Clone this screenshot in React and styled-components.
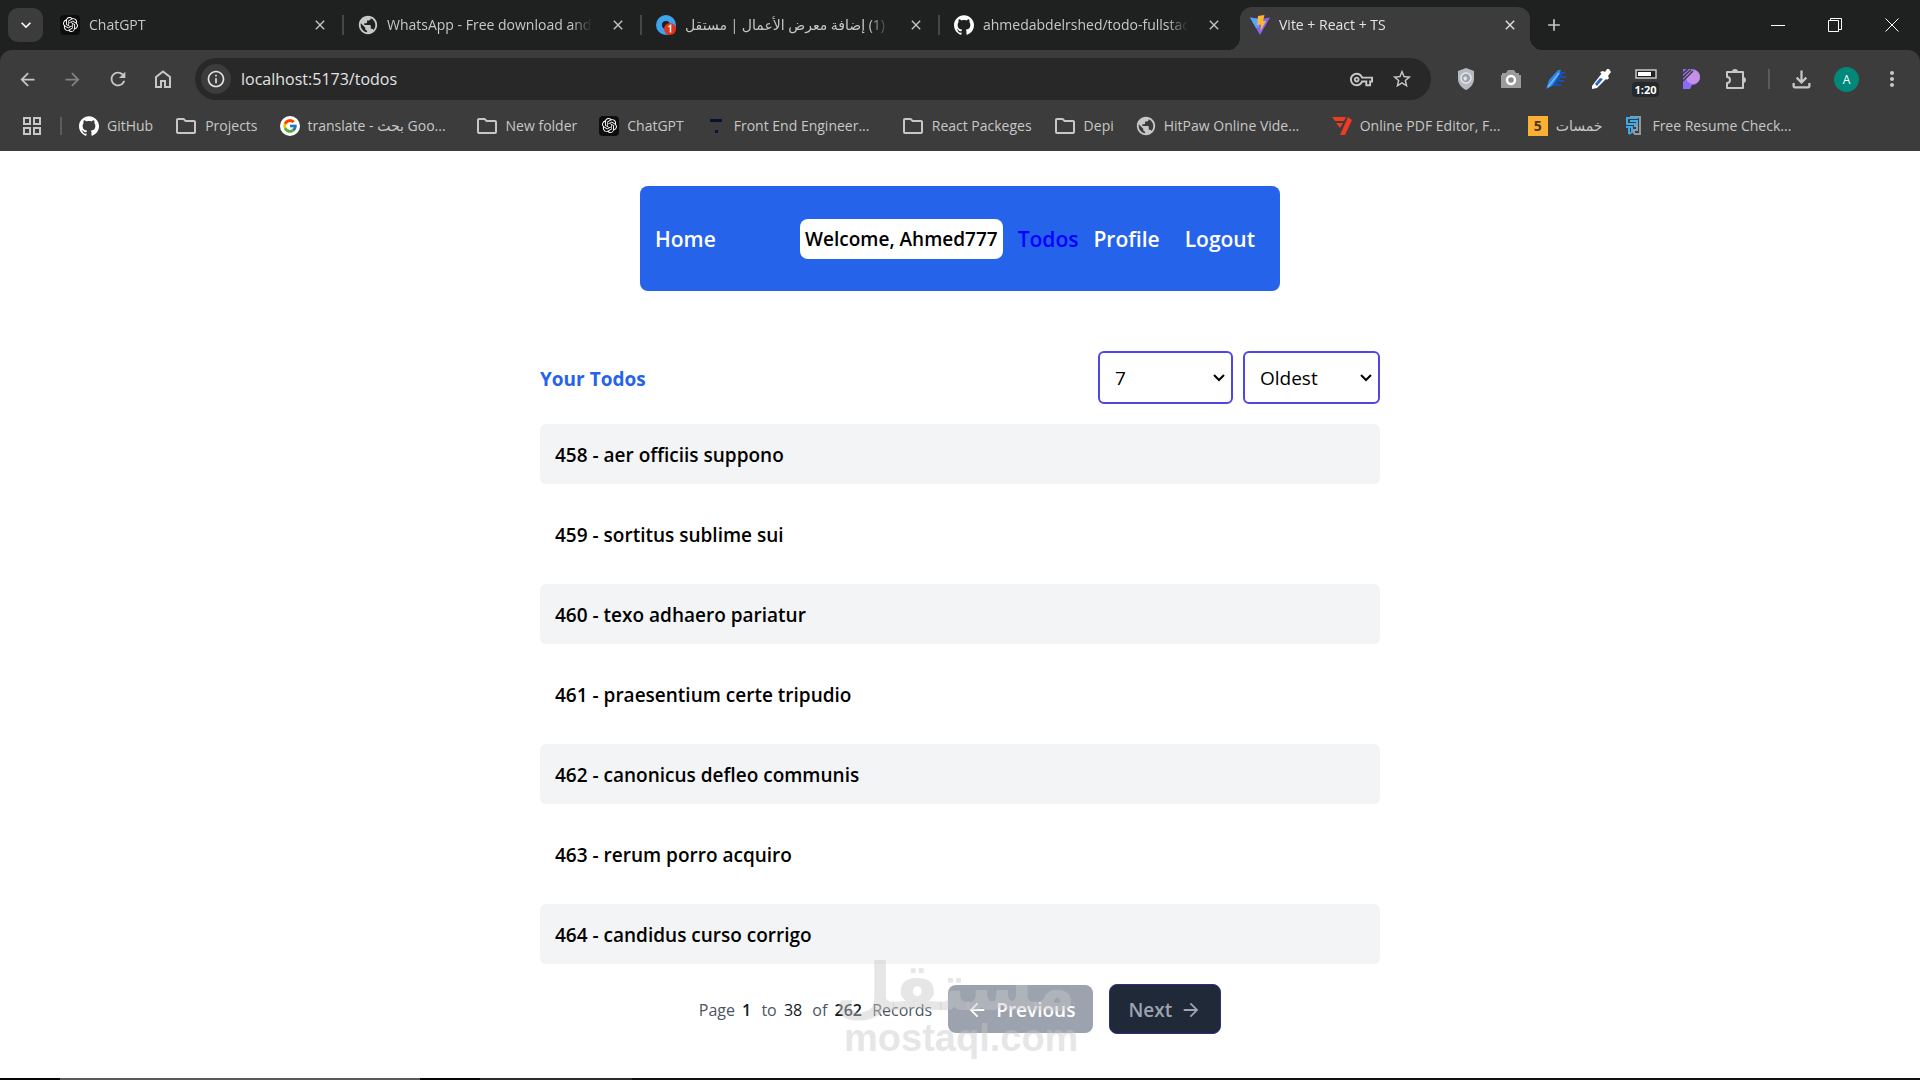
import React from "react";
import styled, { createGlobalStyle } from "styled-components";
import { SiGithub, SiOpenai } from "react-icons/si";
import { FcGoogle } from "react-icons/fc";
import {
  MdArrowBack,
  MdArrowForward,
  MdRefresh,
  MdInfoOutline,
  MdClose,
  MdAdd,
  MdStarBorder,
  MdOutlineVpnKey,
  MdOutlineFileDownload,
  MdMoreVert,
  MdOutlineFolder,
  MdPublic,
  MdGridView,
  MdKeyboardArrowDown,
} from "react-icons/md";

const tabs = [
  { title: "ChatGPT", icon: "openai" },
  { title: "WhatsApp - Free download and install", icon: "globe" },
  { title: "(1) إضافة معرض الأعمال | مستقل", icon: "mostaql", rtl: true },
  { title: "ahmedabdelrshed/todo-fullstack-app", icon: "github" },
  { title: "Vite + React + TS", icon: "vite", active: true },
];

const bookmarks = [
  { title: "GitHub", icon: "github" },
  { title: "Projects", icon: "folder" },
  { title: "translate - بحث Goo...", icon: "google", long: true },
  { title: "New folder", icon: "folder" },
  { title: "ChatGPT", icon: "openai" },
  { title: "Front End Engineer...", icon: "dash", long: true },
  { title: "React Packeges", icon: "folder" },
  { title: "Depi", icon: "folder" },
  { title: "HitPaw Online Vide...", icon: "globe", long: true },
  { title: "Online PDF Editor, F...", icon: "pdf", long: true },
  { title: "خمسات", icon: "khamsat" },
  { title: "Free Resume Check...", icon: "resume", long: true },
];

const todos = [
  { id: 458, title: "aer officiis suppono" },
  { id: 459, title: "sortitus sublime sui" },
  { id: 460, title: "texo adhaero pariatur" },
  { id: 461, title: "praesentium certe tripudio" },
  { id: 462, title: "canonicus defleo communis" },
  { id: 463, title: "rerum porro acquiro" },
  { id: 464, title: "candidus curso corrigo" },
];

const SiteIcon = ({ name }) => {
  switch (name) {
    case "openai":
      return (
        <DarkBadge>
          <SiOpenai size={15} />
        </DarkBadge>
      );
    case "github":
      return <SiGithub size={20} color="#fff" />;
    case "google":
      return (
        <LightBadge>
          <FcGoogle size={16} />
        </LightBadge>
      );
    case "folder":
      return <MdOutlineFolder size={24} />;
    case "globe":
      return <MdPublic size={22} />;
    case "mostaql":
      return (
        <svg width="20" height="20" viewBox="0 0 20 20">
          <circle cx="10" cy="10" r="7" fill="none" stroke="#3fa3ee" strokeWidth="6" />
          <circle cx="14" cy="14" r="6" fill="#e2331d" />
          <path d="M12.5 12 L14.5 10.5 V17.5" fill="none" stroke="#fff" strokeWidth="1.5" />
        </svg>
      );
    case "vite":
      return (
        <svg width="20" height="20" viewBox="0 0 20 20">
          <path d="M0 2.5 L10 20 L20 2.5 L11.5 4 Z" fill="#8a63f5" />
          <path d="M0 2.5 L8 4 L9 12 L6 13 Z" fill="#4da9fb" />
          <path d="M8 1 L14.5 0 L13 6 L16 6 L10.5 16 L11 9.5 L7 10 Z" fill="#fdb62f" />
        </svg>
      );
    case "dash":
      return (
        <svg width="20" height="20" viewBox="0 0 20 20">
          <path d="M4 3 H16 V6 H4 Z M9 14 H12 V17 H9 Z" fill="#0b1033" />
        </svg>
      );
    case "pdf":
      return (
        <svg width="20" height="20" viewBox="0 0 20 20">
          <path d="M0 1 H14 L12 5 H3 Z M4 7 H11 L8 12 Z M16 1 L20 4 L13 19 H8 Z" fill="#ee3b22" />
        </svg>
      );
    case "khamsat":
      return <FiveBadge>5</FiveBadge>;
    case "resume":
      return (
        <svg width="18" height="20" viewBox="0 0 18 20" fill="none" strokeWidth="2">
          <path d="M5 1 H15 V18 H9 M9 10 H12 V14 H9 V18" stroke="#8d9aa5" />
          <path d="M13 2 H2 V8 H12 V5 H5 M1 11 H8 M4 11 V18 M7 11 V16 L4 18" stroke="#3ea9e8" />
        </svg>
      );
    default:
      return null;
  }
};

const Extensions = () => (
  <>
    <ToolButton aria-label="Security">
      <svg width="18" height="22" viewBox="0 0 18 22">
        <path d="M9 0 L17 3 V11 C17 16 13 20 9 22 C5 20 1 16 1 11 V3 Z" fill="#b4babf" />
        <circle cx="9" cy="10" r="5" fill="#9aa2ab" stroke="#e6e9ec" strokeWidth="1.5" />
        <path d="M6 10 L9 8 L10 11 L8 13 Z" fill="#e6e9ec" />
      </svg>
    </ToolButton>
    <ToolButton aria-label="Screenshot">
      <svg width="20" height="20" viewBox="0 0 20 20">
        <path d="M1 6 V4 H5 L7 1 H13 L15 4 H18 V6 H20 V19 H0 V6 Z" fill="#9b9b9b" />
        <circle cx="10" cy="11" r="4" fill="#8a8a8a" stroke="#fff" strokeWidth="2.5" />
      </svg>
    </ToolButton>
    <ToolButton aria-label="Feather">
      <svg width="20" height="20" viewBox="0 0 20 20">
        <path d="M10 6 L13 3 H19 V5 H16 V7 H20 V9 H14 V11 H18 V13 H11 V15 H15 V17 H6 Z" fill="#1b4fae" />
        <path d="M0 20 L3 11 L12 1 H15 L13 6 L6 17 Z" fill="#2e86e8" />
        <path d="M2 18 L13 4" stroke="#6fb8f7" strokeWidth="1.5" />
      </svg>
    </ToolButton>
    <ToolButton aria-label="Color picker">
      <svg width="20" height="20" viewBox="0 0 20 20">
        <path d="M11 4 L16 9 L6 19 L1 20 L1 17 Z" fill="#fff" />
        <path d="M9 9 L12 10 L6 17 L4 15 Z" fill="#2867c9" />
        <path d="M9 3 L12 2 L14 3 L16 0 H18 L20 3 L17 7 L18 9 L16 11 Z" fill="#fff" />
      </svg>
    </ToolButton>
    <TimerButton aria-label="Timer">
      <svg width="22" height="10" viewBox="0 0 22 10">
        <path d="M1 1 H21 V9 H1 Z" fill="#222" stroke="#c9c9c9" strokeWidth="1.5" />
        <path d="M3 3 H16 V7 H3 Z" fill="#fff" />
      </svg>
      <TimerText>1:20</TimerText>
    </TimerButton>
    <ToolButton aria-label="Palette">
      <svg width="18" height="20" viewBox="0 0 18 20">
        <path d="M1 0 H10 A8 8 0 0 1 10 16 L8 20 H1 Z" fill="#8b6cf6" />
        <circle cx="11" cy="8" r="7" fill="#c690ea" />
        <path d="M0 5 L6 0 M0 9 L9 1 M1 12 L11 2" stroke="#3c3c3c" strokeWidth="1.5" />
      </svg>
    </ToolButton>
    <ToolButton aria-label="Extensions">
      <svg width="22" height="22" viewBox="0 0 22 22" fill="none" stroke="currentColor" strokeWidth="2">
        <path
          d="M2 4 H18 V20 H2 V15 C6 15 6 9 2 9 Z"
          strokeLinejoin="round"
        />
        <path d="M8 4 A2 2 0 0 1 12 4 Z M18 10 A2 2 0 0 1 18 14 Z" fill="currentColor" />
      </svg>
    </ToolButton>
  </>
);

function BrowserChrome() {
  return (
    <Browser>
      <TabStrip>
        <TabSearch aria-label="Search tabs">
          <MdKeyboardArrowDown size={20} />
        </TabSearch>
        {tabs.map((tab) => (
          <Tab key={tab.title} $active={tab.active}>
            <IconSlot>
              <SiteIcon name={tab.icon} />
            </IconSlot>
            <TabTitle dir={tab.rtl ? "rtl" : "ltr"}>{tab.title}</TabTitle>
            <TabClose aria-label="Close tab">
              <MdClose size={16} />
            </TabClose>
          </Tab>
        ))}
        <NewTab aria-label="New tab">
          <MdAdd size={20} />
        </NewTab>
        <WindowButtons>
          <WindowButton aria-label="Minimize">
            <svg width="14" height="14" viewBox="0 0 14 14">
              <path d="M0 7.5 H14" stroke="#fff" />
            </svg>
          </WindowButton>
          <WindowButton aria-label="Restore">
            <svg width="14" height="14" viewBox="0 0 14 14" fill="none" stroke="#fff">
              <path d="M0.5 2.5 H10.5 V13.5 H0.5 Z M2.5 2.5 V0.5 H13.5 V11.5 H10.5" />
            </svg>
          </WindowButton>
          <WindowButton aria-label="Close">
            <svg width="14" height="14" viewBox="0 0 14 14">
              <path d="M0.5 0.5 L13.5 13.5 M13.5 0.5 L0.5 13.5" stroke="#fff" />
            </svg>
          </WindowButton>
        </WindowButtons>
      </TabStrip>
      <Toolbar>
        <ToolButton aria-label="Back">
          <MdArrowBack size={21} />
        </ToolButton>
        <ToolButton aria-label="Forward" $dim>
          <MdArrowForward size={21} />
        </ToolButton>
        <ToolButton aria-label="Reload">
          <MdRefresh size={22} />
        </ToolButton>
        <ToolButton aria-label="Home page">
          <svg width="16" height="18" viewBox="0 0 16 18" fill="none" stroke="currentColor" strokeWidth="2">
            <path d="M1 7 L8 1.5 L15 7 V17 H10 V11 H6 V17 H1 Z" />
          </svg>
        </ToolButton>
        <AddressBar>
          <InfoBadge>
            <MdInfoOutline size={20} />
          </InfoBadge>
          <AddressInput aria-label="Address" defaultValue="localhost:5173/todos" />
          <MdOutlineVpnKey size={23} />
          <MdStarBorder size={22} />
        </AddressBar>
        <Extensions />
        <ToolDivider />
        <ToolButton aria-label="Downloads">
          <MdOutlineFileDownload size={27} />
        </ToolButton>
        <ToolButton aria-label="Account">
          <Avatar>A</Avatar>
        </ToolButton>
        <ToolButton aria-label="Menu">
          <MdMoreVert size={24} />
        </ToolButton>
      </Toolbar>
      <BookmarksBar>
        <MdGridView size={24} />
        <BookmarksDivider />
        {bookmarks.map((bookmark) => (
          <Bookmark key={bookmark.title} href="#">
            <IconSlot>
              <SiteIcon name={bookmark.icon} />
            </IconSlot>
            <BookmarkLabel $long={bookmark.long}>{bookmark.title}</BookmarkLabel>
          </Bookmark>
        ))}
      </BookmarksBar>
    </Browser>
  );
}

function Navbar() {
  return (
    <Nav>
      <NavLink href="#">Home</NavLink>
      <NavLinks>
        <Welcome>Welcome, Ahmed777</Welcome>
        <NavLink href="#" $active>
          Todos
        </NavLink>
        <NavLink href="#">Profile</NavLink>
        <LogoutButton>Logout</LogoutButton>
      </NavLinks>
    </Nav>
  );
}

function Paginator() {
  return (
    <Pagination>
      <PageInfo>
        Page <PageNumber $bold>1</PageNumber> to <PageNumber>38</PageNumber> of{" "}
        <PageNumber $bold>262</PageNumber> Records
      </PageInfo>
      <PageButton disabled $muted>
        <MdArrowBack size={22} />
        Previous
      </PageButton>
      <PageButton>
        Next
        <MdArrowForward size={22} />
      </PageButton>
      <Watermark aria-hidden="true">
        <WatermarkArabic dir="rtl">مستقل</WatermarkArabic>
        <WatermarkLatin>mostaql.com</WatermarkLatin>
      </Watermark>
    </Pagination>
  );
}

export default function App() {
  return (
    <>
      <GlobalStyle />
      <Screen>
        <BrowserChrome />
        <Page>
          <Navbar />
          <TodosSection>
            <TodosHeader>
              <TodosTitle>Your Todos</TodosTitle>
              <Filters>
                <Select aria-label="Todos per page" defaultValue="7" $width={135}>
                  <option value="7">7</option>
                  <option value="10">10</option>
                </Select>
                <Select aria-label="Sort order" defaultValue="Oldest" $width={137}>
                  <option>Oldest</option>
                  <option>Latest</option>
                </Select>
              </Filters>
            </TodosHeader>
            <TodoList>
              {todos.map((todo) => (
                <TodoItem key={todo.id}>
                  {todo.id} - {todo.title}
                </TodoItem>
              ))}
            </TodoList>
            <Paginator />
          </TodosSection>
        </Page>
        <Taskbar />
      </Screen>
    </>
  );
}

const GlobalStyle = createGlobalStyle`
  * {
    box-sizing: border-box;
  }

  body {
    margin: 0;
    background: #fff;
    font-family: "Open Sans", "DejaVu Sans", sans-serif;
  }

  button {
    border: 0;
    padding: 0;
    background: none;
    color: inherit;
    font: inherit;
  }

  a {
    color: inherit;
    text-decoration: none;
  }

  svg {
    flex-shrink: 0;
  }
`;

const Screen = styled.div`
  display: flex;
  flex-direction: column;
  min-height: 100vh;
`;

const Browser = styled.header`
  background: #1f2020;
  color: #c7c7c7;
  font-size: 14px;
`;

const TabStrip = styled.div`
  display: flex;
  align-items: flex-end;
  height: 50px;
  padding-left: 8px;
`;

const TabSearch = styled.button`
  display: flex;
  align-items: center;
  justify-content: center;
  width: 35px;
  height: 34px;
  margin: 0 3px 8px 0;
  border-radius: 10px;
  background: #3c3c3c;
  color: #fff;
`;

const Tab = styled.div`
  position: relative;
  display: flex;
  align-items: center;
  flex: 0 1 ${(props) => (props.$active ? 290 : 298)}px;
  min-width: 0;
  height: 43px;
  margin: ${(props) => (props.$active ? "0 2px" : "0")};
  padding: ${(props) => (props.$active ? "0 12px 8px 9px" : "0 16px 8px 13px")};
  border-radius: 12px 12px 0 0;
  background: ${(props) => (props.$active ? "#3c3c3c" : "transparent")};
  color: ${(props) => (props.$active ? "#e3e3e3" : "#c7c7c7")};

  /* curved feet of the selected tab */
  &::before {
    content: "";
    display: ${(props) => (props.$active ? "block" : "none")};
    position: absolute;
    left: -12px;
    right: -12px;
    bottom: 0;
    height: 12px;
    background:
      radial-gradient(circle at 0 0, transparent 12px, #3c3c3c 12px) left / 12px 12px no-repeat,
      radial-gradient(circle at 100% 0, transparent 12px, #3c3c3c 12px) right / 12px 12px no-repeat;
  }

  &:not(:nth-last-child(-n + 4))::after {
    content: "";
    position: absolute;
    right: 0;
    top: 8px;
    width: 2px;
    height: 20px;
    background: #474747;
  }
`;

const IconSlot = styled.span`
  display: flex;
  align-items: center;
  justify-content: center;
  flex: 0 0 22px;
  height: 22px;
`;

const TabTitle = styled.span`
  flex: 1;
  margin: 0 18px 0 8px;
  overflow: hidden;
  white-space: nowrap;
  text-align: left;
  mask-image: linear-gradient(to right, #000 90%, transparent);
`;

const TabClose = styled.button`
  display: flex;
`;

const NewTab = styled.button`
  display: flex;
  align-items: center;
  height: 50px;
  margin-left: 12px;
`;

const WindowButtons = styled.div`
  display: flex;
  margin-left: auto;
`;

const WindowButton = styled.button`
  display: flex;
  align-items: center;
  justify-content: center;
  width: 57px;
  height: 50px;
`;

const Toolbar = styled.div`
  display: flex;
  align-items: center;
  height: 58px;
  padding: 0 6px 0 5px;
  border-radius: 12px 12px 0 0;
  background: #3c3c3c;
`;

const ToolButton = styled.button`
  display: flex;
  align-items: center;
  justify-content: center;
  width: 45px;
  height: 42px;
  opacity: ${(props) => (props.$dim ? 0.5 : 1)};
`;

const TimerButton = styled(ToolButton)`
  flex-direction: column;
  gap: 3px;
  padding-top: 8px;
`;

const TimerText = styled.span`
  padding: 0 2px;
  border-radius: 4px;
  background: #24292e;
  color: #fff;
  font-size: 11px;
  font-weight: 700;
  line-height: 15px;
`;

const AddressBar = styled.div`
  display: flex;
  align-items: center;
  flex: 1;
  gap: 18px;
  height: 42px;
  margin: 0 12px 0 10px;
  padding: 0 18px 0 6px;
  border-radius: 21px;
  background: #282828;
`;

const InfoBadge = styled.span`
  display: flex;
  align-items: center;
  justify-content: center;
  width: 30px;
  height: 30px;
  margin-right: -8px;
  border-radius: 50%;
  background: #3c3c3c;
  color: #e3e3e3;
`;

const AddressInput = styled.input`
  flex: 1;
  min-width: 0;
  border: 0;
  padding: 0;
  outline: none;
  background: transparent;
  color: #e3e3e3;
  font: inherit;
  font-size: 16px;
`;

const ToolDivider = styled.span`
  width: 2px;
  height: 20px;
  margin: 0 9px 0 10px;
  background: #5c5c5c;
`;

const Avatar = styled.span`
  display: flex;
  align-items: center;
  justify-content: center;
  width: 25px;
  height: 25px;
  border-radius: 50%;
  background: #00897b;
  color: #fff;
  font-size: 12px;
`;

const BookmarksBar = styled.nav`
  display: flex;
  align-items: center;
  height: 43px;
  padding: 0 20px 8px;
  overflow: hidden;
  background: #3c3c3c;
`;

const BookmarksDivider = styled.span`
  width: 2px;
  height: 18px;
  margin: 0 16px;
  background: #5c5c5c;
`;

const Bookmark = styled.a`
  display: flex;
  align-items: center;
  gap: 7px;
  margin-right: 21px;
  white-space: nowrap;
`;

const BookmarkLabel = styled.span`
  min-width: ${(props) => (props.$long ? "146px" : "0")};
`;

const DarkBadge = styled.span`
  display: flex;
  align-items: center;
  justify-content: center;
  width: 20px;
  height: 20px;
  border-radius: 4px;
  background: #0d0d0d;
  color: #fff;
`;

const LightBadge = styled(DarkBadge)`
  border-radius: 50%;
  background: #fff;
`;

const FiveBadge = styled(DarkBadge)`
  border-radius: 0;
  background: #fbb034;
  color: #4a3426;
  font-size: 14px;
  font-weight: 700;
`;

const Page = styled.main`
  flex: 1;
  padding: 35px 16px 0;
`;

const Nav = styled.nav`
  display: flex;
  align-items: center;
  justify-content: space-between;
  max-width: 640px;
  height: 105px;
  margin: 0 auto;
  padding: 0 25px 0 15px;
  border-radius: 8px;
  background: #2563eb;
  color: #fff;
  font-size: 21px;
  font-weight: 600;
`;

const NavLinks = styled.div`
  display: flex;
  align-items: center;
  gap: 15px;
`;

const NavLink = styled.a`
  color: ${(props) => (props.$active ? "#0000ff" : "#fff")};
`;

const Welcome = styled.span`
  padding: 0 5px;
  border-radius: 8px;
  background: #fff;
  color: #000;
  font-size: 19px;
  line-height: 40px;
`;

const LogoutButton = styled.button`
  margin-left: 10px;
`;

const TodosSection = styled.section`
  max-width: 840px;
  margin: 60px auto 0;
`;

const TodosHeader = styled.div`
  display: flex;
  align-items: center;
  justify-content: space-between;
  margin-bottom: 20px;
`;

const TodosTitle = styled.h1`
  margin: 0;
  padding-top: 2px;
  color: #2563eb;
  font-size: 19px;
  font-weight: 700;
`;

const Filters = styled.div`
  display: flex;
  gap: 10px;
`;

const Select = styled.select`
  width: ${(props) => props.$width}px;
  height: 53px;
  padding: 0 16px 0 15px;
  border: 2px solid #4f46e5;
  border-radius: 6px;
  appearance: none;
  background: #fff
    url("data:image/svg+xml,%3Csvg xmlns='http://www.w3.org/2000/svg' width='12' height='8' fill='none' stroke='black' stroke-width='2'%3E%3Cpath d='M1 1 L6 6 L11 1'/%3E%3C/svg%3E")
    right 6px center no-repeat;
  color: #000;
  font-family: inherit;
  font-size: 19px;
`;

const TodoList = styled.ul`
  display: flex;
  flex-direction: column;
  gap: 20px;
  margin: 0;
  padding: 0;
  list-style: none;
`;

const TodoItem = styled.li`
  padding: 2px 15px 0;
  border-radius: 6px;
  color: #000;
  font-size: 19px;
  font-weight: 600;
  line-height: 58px;

  &:nth-child(odd) {
    background: #f3f4f6;
  }
`;

const Pagination = styled.div`
  position: relative;
  display: flex;
  align-items: center;
  justify-content: center;
  gap: 16px;
  margin-top: 20px;
`;

const PageInfo = styled.p`
  margin: 0;
  padding-top: 2px;
  color: #4b5563;
  font-size: 16px;
`;

const PageNumber = styled.span`
  margin: 0 6px 0 3px;
  color: #111827;
  font-weight: ${(props) => (props.$bold ? 600 : 400)};
`;

const PageButton = styled.button`
  display: flex;
  align-items: center;
  gap: 8px;
  height: ${(props) => (props.$muted ? 48 : 50)}px;
  padding: 2px 18px 0;
  border: ${(props) => (props.$muted ? "0" : "1px solid #312e81")};
  border-radius: 8px;
  background: ${(props) => (props.$muted ? "#9ca3af" : "#1f2937")};
  color: ${(props) => (props.$muted ? "#fff" : "#9ca3af")};
  font-size: 19px;
  font-weight: 600;
`;

const Watermark = styled.div`
  position: absolute;
  top: -28px;
  left: 50%;
  width: 232px;
  margin-left: -116px;
  color: rgba(200, 200, 200, 0.45);
  font-weight: 700;
  text-align: center;
  white-space: nowrap;
  pointer-events: none;
`;

const WatermarkArabic = styled.div`
  font-family: "DejaVu Sans", sans-serif;
  font-size: 66px;
  line-height: 64px;
`;

const WatermarkLatin = styled.div`
  font-family: "Liberation Sans", sans-serif;
  font-size: 38px;
  line-height: 36px;
`;

const Taskbar = styled.footer`
  height: 2px;
  background: linear-gradient(to right, #050505 60px, #5a5a5a 60px 420px, #050505 420px 480px, #2b2b2b 480px 632px, #111 632px);
`;
